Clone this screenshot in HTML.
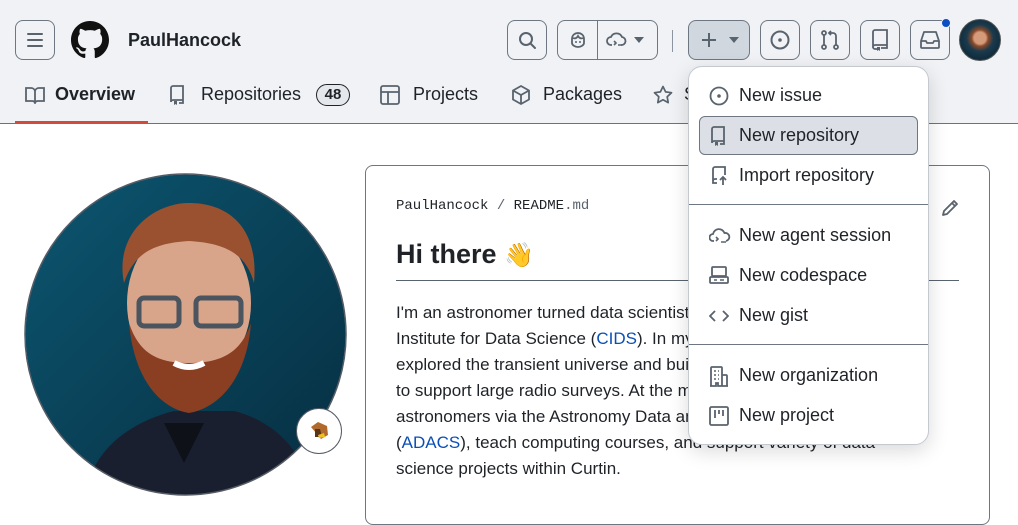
<!DOCTYPE html>
<html><head><meta charset="utf-8">
<style>
*{box-sizing:border-box;margin:0;padding:0}
body{width:1018px;height:502px;overflow:hidden;background:#fff;font-family:"Liberation Sans",sans-serif;color:#1f2328;position:relative}
.hdr{position:absolute;left:0;top:0;width:1018px;height:124px;background:#f0f2f5;border-bottom:1px solid #6b7280}
.btn{position:absolute;top:20px;height:40px;border:1px solid #6e7781;border-radius:8px;background:#f0f2f5}
.abs{position:absolute}
svg{display:block}
.tab{position:absolute;top:84px;font-size:18px;color:#1f2328}
.menu{position:absolute;left:688px;top:66px;width:241px;height:379px;background:#fff;border:1px solid #c4c9d0;border-radius:14px;box-shadow:0 6px 20px rgba(0,0,0,.15)}
.mi{position:absolute;left:50px;font-size:18px;color:#1f2328}
.ic{position:absolute;left:20px}
.p{position:absolute;left:396px;font-size:17px;color:#1f2328;white-space:nowrap}
a{color:#0a4fb8}
</style></head><body>
<div class="hdr"></div>
<div class="btn" style="left:15px;width:40px"><svg width="38" height="38" viewBox="0 0 38 38"><path d="M12 13h14M12 19h14M12 25h14" stroke="#59636e" stroke-width="2" stroke-linecap="round"/></svg></div>
<svg class="abs" style="left:71px;top:21px" width="38" height="38" viewBox="0 0 16 16"><path fill="#111" d="M8 0C3.58 0 0 3.58 0 8c0 3.54 2.29 6.53 5.47 7.59.4.07.55-.17.55-.38 0-.19-.01-.82-.01-1.49-2.01.37-2.53-.49-2.69-.94-.09-.23-.48-.94-.82-1.13-.28-.15-.68-.52-.01-.53.63-.01 1.08.58 1.23.82.72 1.21 1.87.87 2.33.66.07-.52.28-.87.51-1.07-1.78-.2-3.64-.89-3.64-3.95 0-.87.31-1.59.82-2.15-.08-.2-.36-1.02.08-2.12 0 0 .67-.21 2.2.82.64-.18 1.32-.27 2-.27.68 0 1.36.09 2 .27 1.53-1.04 2.2-.82 2.2-.82.44 1.1.16 1.92.08 2.12.51.56.82 1.27.82 2.15 0 3.07-1.87 3.75-3.65 3.95.29.25.54.73.54 1.48 0 1.07-.01 1.93-.01 2.2 0 .21.15.46.55.38A8.013 8.013 0 0016 8c0-4.42-3.58-8-8-8z"/></svg>
<div class="abs" style="left:128px;top:30px;font-size:18px;font-weight:bold">PaulHancock</div>

<div class="btn" style="left:507px;width:40px"><svg width="38" height="38" viewBox="0 0 38 38"><circle cx="18" cy="18" r="6" fill="none" stroke="#59636e" stroke-width="2"/><path d="M22.5 22.5l4.5 4.5" stroke="#59636e" stroke-width="2" stroke-linecap="round"/></svg></div>
<div class="btn" style="left:557px;width:101px"><svg class="abs" style="left:10px;top:9px" width="20" height="20" viewBox="0 0 20 20"><path d="M4 9c0-4 3-6 6-6s6 2 6 6v4c0 2-3 4-6 4s-6-2-6-4z M5 8c2 1 4 0 5-2 1 2 3 3 5 2" fill="none" stroke="#59636e" stroke-width="1.8"/><circle cx="8" cy="12" r="1" fill="#59636e"/><circle cx="12" cy="12" r="1" fill="#59636e"/></svg><div class="abs" style="left:39px;top:0;width:1px;height:38px;background:#6e7781"></div><svg class="abs" style="left:48px;top:10px" width="22" height="18" viewBox="0 0 22 18"><path d="M6 14H5a4 4 0 010-8 6 6 0 0111 0 4 4 0 01-1 8" fill="none" stroke="#59636e" stroke-width="1.8"/><path d="M8 10l2 2-2 2M12 14h4" fill="none" stroke="#59636e" stroke-width="1.6"/></svg><svg class="abs" style="left:76px;top:16px" width="10" height="6"><path d="M0 0h10L5 6z" fill="#59636e"/></svg></div>
<div class="abs" style="left:672px;top:30px;width:1px;height:22px;background:#8c959f"></div>
<div class="btn" style="left:688px;width:62px;background:#d1d7de"><svg class="abs" style="left:10px;top:9px" width="20" height="20"><path d="M10 3v14M3 10h14" stroke="#59636e" stroke-width="2"/></svg><svg class="abs" style="left:40px;top:16px" width="10" height="6"><path d="M0 0h10L5 6z" fill="#59636e"/></svg></div>
<div class="btn" style="left:760px;width:40px"><svg width="38" height="38"><circle cx="19" cy="19" r="8.5" fill="none" stroke="#59636e" stroke-width="2"/><circle cx="19" cy="19" r="1.8" fill="#59636e"/></svg></div>
<div class="btn" style="left:810px;width:40px"><svg width="38" height="38"><circle cx="13" cy="12" r="2" fill="none" stroke="#59636e" stroke-width="1.8"/><circle cx="13" cy="26" r="2" fill="none" stroke="#59636e" stroke-width="1.8"/><circle cx="25" cy="26" r="2" fill="none" stroke="#59636e" stroke-width="1.8"/><path d="M13 14v10M25 24v-9a3 3 0 00-3-3h-3M20 10l-2 2 2 2" fill="none" stroke="#59636e" stroke-width="1.8"/></svg></div>
<div class="btn" style="left:860px;width:40px"><svg width="38" height="38"><path d="M12 27V11a2 2 0 012-2h12v15H14a2 2 0 00-2 2 2 2 0 002 2h2M20 27h6v-3" fill="none" stroke="#59636e" stroke-width="1.8"/><path d="M16 26v4l1.5-1 1.5 1v-4z" fill="#59636e"/></svg></div>
<div class="btn" style="left:910px;width:40px"><svg width="38" height="38"><path d="M10 20l3-9h12l3 9v6a1 1 0 01-1 1H11a1 1 0 01-1-1z M10 20h5l1 2h6l1-2h5" fill="none" stroke="#59636e" stroke-width="1.8" stroke-linejoin="round"/></svg></div>
<div class="abs" style="left:941px;top:18px;width:10px;height:10px;border-radius:50%;background:#0c4ec4;border:1px solid #f0f2f5"></div>
<div class="abs" style="left:959px;top:19px;width:42px;height:42px;border-radius:50%;background:radial-gradient(circle at 50% 45%,#d49a7a 0 20%,#8a4a2a 28%,#1b3a4c 45%,#0f2d3e 70%);border:1px solid #555"></div>

<svg class="abs" style="left:25px;top:86px" width="20" height="18" viewBox="0 0 20 18"><path d="M1 2h5a4 4 0 014 3 4 4 0 014-3h5v13h-6a3 3 0 00-3 2 3 3 0 00-3-2H1z M10 5v12" fill="none" stroke="#59636e" stroke-width="1.8"/></svg>
<div class="tab" style="left:55px;font-weight:bold">Overview</div>
<div class="abs" style="left:15px;top:121px;width:133px;height:3px;background:#cf4b3c"></div>
<svg class="abs" style="left:168px;top:85px" width="18" height="20" viewBox="0 0 18 20"><path d="M3 17V3a2 2 0 012-2h10v14H5a2 2 0 00-2 2M11 18h4v-3" fill="none" stroke="#59636e" stroke-width="1.8"/><path d="M6 16v4l1.5-1 1.5 1v-4z" fill="#59636e"/></svg>
<div class="tab" style="left:201px">Repositories</div>
<div class="abs" style="left:316px;top:84px;width:34px;height:22px;border:1px solid #1f2328;border-radius:11px;background:#e4e7eb;font-size:15px;font-weight:bold;text-align:center;line-height:20px">48</div>
<svg class="abs" style="left:380px;top:85px" width="20" height="20"><rect x="1" y="1" width="18" height="18" rx="2" fill="none" stroke="#59636e" stroke-width="1.8"/><path d="M1 7h18M8 7v12" stroke="#59636e" stroke-width="1.8"/></svg>
<div class="tab" style="left:413px">Projects</div>
<svg class="abs" style="left:511px;top:85px" width="20" height="20"><path d="M10 1l8 4.5v9L10 19l-8-4.5v-9z M2 5.5l8 4.5 8-4.5M10 10v9" fill="none" stroke="#59636e" stroke-width="1.8" stroke-linejoin="round"/></svg>
<div class="tab" style="left:543px">Packages</div>
<svg class="abs" style="left:653px;top:85px" width="20" height="20"><path d="M10 1.5l2.6 5.4 5.9.8-4.3 4.1 1 5.8L10 14.8l-5.2 2.8 1-5.8L1.5 7.7l5.9-.8z" fill="none" stroke="#59636e" stroke-width="1.7" stroke-linejoin="round"/></svg>
<div class="tab" style="left:684px">S</div>

<!-- avatar -->
<svg class="abs" style="left:24px;top:173px" width="323" height="323" viewBox="0 0 323 323">
<defs><clipPath id="c"><circle cx="161.5" cy="161.5" r="160"/></clipPath><linearGradient id="bg" x1="0" y1="0" x2="1" y2="1"><stop offset="0" stop-color="#0c5670"/><stop offset="1" stop-color="#062d40"/></linearGradient></defs>
<g clip-path="url(#c)">
<rect width="323" height="323" fill="url(#bg)"/>
<path d="M60 323c10-50 50-75 90-85h60c40 10 70 40 80 85z" fill="#1a1f30"/>
<path d="M140 250l20 40 20-40z" fill="#0e1118"/>
<ellipse cx="165" cy="130" rx="62" ry="78" fill="#d8a48a"/>
<path d="M105 150c5 55 30 85 60 90 30-5 58-35 62-90-10 30-30 40-62 40s-50-10-60-40z" fill="#8a3e22"/>
<path d="M100 110c-10-50 30-80 65-80 40 0 70 25 65 80-8-30-30-40-65-42-35 2-55 12-65 42z" fill="#9a5130"/>
<rect x="115" y="125" width="40" height="28" rx="5" fill="none" stroke="#4a5560" stroke-width="5"/>
<rect x="172" y="125" width="45" height="28" rx="5" fill="none" stroke="#4a5560" stroke-width="5"/>
<path d="M150 190q15 8 30 0" stroke="#fff" stroke-width="6" fill="none"/>
</g>
<circle cx="161.5" cy="161.5" r="160.5" fill="none" stroke="#555c66" stroke-width="1.5"/>
</svg>
<div class="abs" style="left:296px;top:408px;width:46px;height:46px;border-radius:50%;background:#fff;border:1px solid #555c66"></div>
<svg class="abs" style="left:307px;top:419px" width="24" height="24"><path d="M4 8l7-5 9 4 1 9-7 4z" fill="#b06a2c"/><path d="M8 10h5l2 8-7 0z" fill="#5a3416"/><path d="M11 16l6-2 1 4-6 1z" fill="#f0c020"/></svg>

<!-- readme -->
<div class="abs" style="left:365px;top:165px;width:625px;height:360px;border:1px solid #6e7781;border-radius:8px"></div>
<div class="abs" style="left:396px;top:198px;font-family:'Liberation Mono',monospace;font-size:14px;color:#1f2328">PaulHancock<span style="color:#59636e"> / </span>README<span style="color:#59636e">.md</span></div>
<svg class="abs" style="left:940px;top:198px" width="20" height="20"><path d="M3 17l1-4L14 3l3 3L7 16z M12 5l3 3" fill="none" stroke="#59636e" stroke-width="1.8" stroke-linejoin="round"/></svg>
<div class="abs" style="left:396px;top:239px;font-size:27px;font-weight:bold">Hi there <span style="font-size:24px">👋</span></div>
<div class="abs" style="left:396px;top:280px;width:563px;height:1px;background:#59636e"></div>
<div class="p" style="top:303px">I'm an astronomer turned data scientist at the Curtin</div>
<div class="p" style="top:329px">Institute for Data Science (<a>CIDS</a>). In my past life I</div>
<div class="p" style="top:355px">explored the transient universe and built software workflows</div>
<div class="p" style="top:381px">to support large radio surveys. At the moment I support</div>
<div class="p" style="top:407px">astronomers via the Astronomy Data and Computing Services</div>
<div class="p" style="top:433px">(<a>ADACS</a>), teach computing courses, and support variety of data</div>
<div class="p" style="top:459px">science projects within Curtin.</div>

<!-- menu -->
<div class="menu">
<svg class="ic" style="top:19px" width="20" height="20"><circle cx="10" cy="10" r="8.5" fill="none" stroke="#59636e" stroke-width="1.8"/><circle cx="10" cy="10" r="1.8" fill="#59636e"/></svg>
<div class="mi" style="top:18px">New issue</div>
<div class="abs" style="left:10px;top:49px;width:219px;height:39px;background:#dce0e6;border:1px solid #6e7781;border-radius:6px"></div>
<svg class="ic" style="top:59px" width="18" height="20" viewBox="0 0 18 20"><path d="M3 17V3a2 2 0 012-2h10v14H5a2 2 0 00-2 2M11 18h4v-3" fill="none" stroke="#59636e" stroke-width="1.8"/><path d="M6 16v4l1.5-1 1.5 1v-4z" fill="#59636e"/></svg>
<div class="mi" style="top:58px">New repository</div>
<svg class="ic" style="top:99px" width="20" height="20"><path d="M8 17H4V3a2 2 0 012-2h10v8M4 15a2 2 0 012-2h2M14 19v-7M11 14l3-3 3 3" fill="none" stroke="#59636e" stroke-width="1.8"/></svg>
<div class="mi" style="top:98px">Import repository</div>
<div class="abs" style="left:0;top:137px;width:239px;height:1px;background:#6e7781"></div>
<svg class="ic" style="top:160px" width="22" height="18"><path d="M5 14H4a3.5 3.5 0 010-7 6 6 0 0111.5-1A4 4 0 0117 14" fill="none" stroke="#59636e" stroke-width="1.8"/><path d="M7 10l2 2-2 2M12 15h5" fill="none" stroke="#59636e" stroke-width="1.6"/></svg>
<div class="mi" style="top:158px">New agent session</div>
<svg class="ic" style="top:198px" width="20" height="20"><rect x="3" y="2" width="14" height="9" rx="1" fill="none" stroke="#59636e" stroke-width="1.8"/><rect x="1" y="12" width="18" height="6" rx="1" fill="none" stroke="#59636e" stroke-width="1.8"/><path d="M5 15h3M11 15h4" stroke="#59636e" stroke-width="1.6"/></svg>
<div class="mi" style="top:198px">New codespace</div>
<svg class="ic" style="top:239px" width="20" height="20"><path d="M6 5l-5 5 5 5M14 5l5 5-5 5" fill="none" stroke="#59636e" stroke-width="1.8"/></svg>
<div class="mi" style="top:238px">New gist</div>
<div class="abs" style="left:0;top:277px;width:239px;height:1px;background:#6e7781"></div>
<svg class="ic" style="top:298px" width="20" height="22"><path d="M2 21V3a1 1 0 011-1h9a1 1 0 011 1v18M13 10h4a1 1 0 011 1v10M1 21h6v-3h2v3h10" fill="none" stroke="#59636e" stroke-width="1.8"/><path d="M5 6h2M9 6h1M5 10h2M9 10h1M5 14h2M9 14h1" stroke="#59636e" stroke-width="1.6"/></svg>
<div class="mi" style="top:298px">New organization</div>
<svg class="ic" style="top:339px" width="20" height="20"><rect x="1" y="1" width="18" height="18" rx="1.5" fill="none" stroke="#59636e" stroke-width="1.8"/><path d="M6 4v8M10 4v4M14 4v6" stroke="#59636e" stroke-width="1.8"/></svg>
<div class="mi" style="top:338px">New project</div>
</div>
</body></html>
